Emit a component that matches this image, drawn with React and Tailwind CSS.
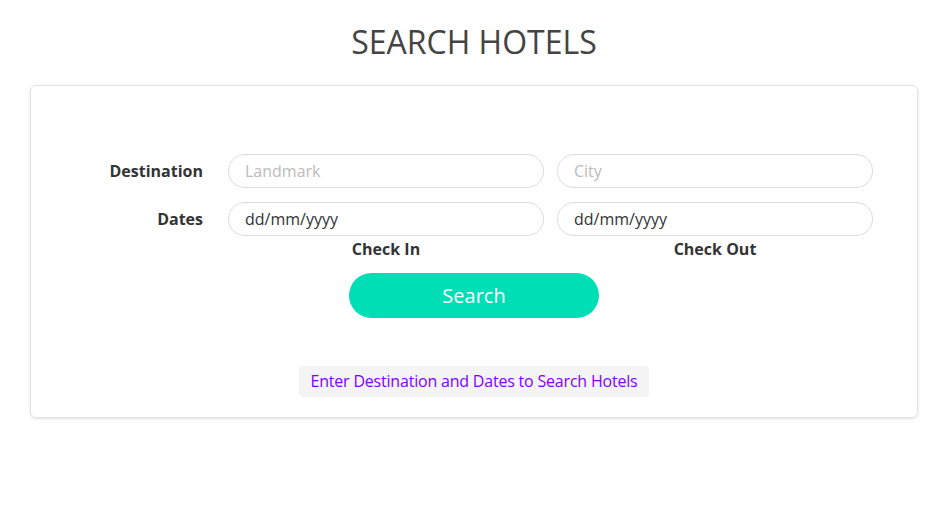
export default function App() {
  return (
    <div className="min-h-screen bg-white font-['Open_Sans',sans-serif] text-[#333]">
      <div className="w-[948px]">
        <h1 className="pt-[22px] text-center text-[32px] leading-[40px] font-normal text-[#444]">
          SEARCH HOTELS
        </h1>
        <div className="ml-[30px] w-[888px] mt-[23px] rounded-md border border-[#e3e3e3] shadow-[0_1px_3px_rgba(0,0,0,0.12)] pt-[68px] pb-[20px]">
          <div className="flex flex-col">
            <div className="flex items-center gap-[25px] pl-[44px]">
              <span className="w-[128px] text-right font-bold text-base">Destination</span>
              <div className="flex gap-[13px]">
                <input
                  className="w-[316px] h-[34px] rounded-full border border-[#dcdcdc] px-4 text-base placeholder:text-[#bbb] outline-none"
                  placeholder="Landmark"
                />
                <input
                  className="w-[316px] h-[34px] rounded-full border border-[#dcdcdc] px-4 text-base placeholder:text-[#bbb] outline-none"
                  placeholder="City"
                />
              </div>
            </div>
            <div className="flex items-start gap-[25px] pl-[44px] mt-[14px]">
              <span className="w-[128px] h-[34px] leading-[34px] text-right font-bold text-base">Dates</span>
              <div className="flex gap-[13px]">
                <div className="w-[316px] flex flex-col items-center">
                  <input
                    className="w-full h-[34px] rounded-full border border-[#dcdcdc] px-4 text-base text-[#333] outline-none"
                    defaultValue="dd/mm/yyyy"
                  />
                  <span className="font-bold text-base leading-[26px]">Check In</span>
                </div>
                <div className="w-[316px] flex flex-col items-center">
                  <input
                    className="w-full h-[34px] rounded-full border border-[#dcdcdc] px-4 text-base text-[#333] outline-none"
                    defaultValue="dd/mm/yyyy"
                  />
                  <span className="font-bold text-base leading-[26px]">Check Out</span>
                </div>
              </div>
            </div>
            <button className="self-center mt-[11px] w-[250px] h-[45px] rounded-full bg-[#00deb6] text-white text-xl">
              Search
            </button>
            <div className="self-center mt-[48px] rounded px-3 h-[31px] leading-[31px] bg-[#f4f4f5] text-[#7f00ff] text-base tracking-[-0.2px]">
              Enter Destination and Dates to Search Hotels
            </div>
          </div>
        </div>
      </div>
    </div>
  );
}
